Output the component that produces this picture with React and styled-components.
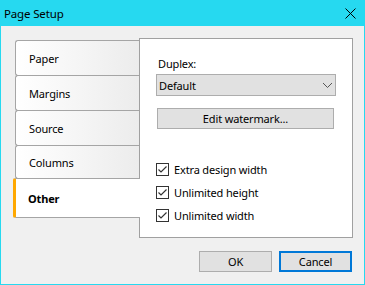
import React from 'react';
import styled, { createGlobalStyle } from 'styled-components';

const GlobalStyle = createGlobalStyle`
  html, body {
    margin: 0;
    padding: 0;
    background: #f0f0f0;
  }
  * {
    box-sizing: border-box;
  }
`;

const Window = styled.div`
  width: 365px;
  height: 285px;
  border: 1px solid #26d9f0;
  border-top: none;
  background: #f0f0f0;
  font-family: "Segoe UI", "Noto Sans", sans-serif;
  font-size: 11px;
  letter-spacing: -0.15px;
  color: #000;
  display: flex;
  flex-direction: column;
`;

const TitleBar = styled.div`
  height: 26px;
  margin: 0 -1px;
  background: #26d9f0;
  display: flex;
  align-items: center;
  justify-content: space-between;
  padding: 0 9px 0 4px;
`;

const Title = styled.span`
  font-size: 11.5px;
`;

const Body = styled.div`
  display: flex;
  padding: 12px 0 0 14px;
`;

const TabList = styled.div`
  width: 124px;
  padding-top: 2px;
  display: flex;
  flex-direction: column;
`;

const Tab = styled.div`
  height: ${p => p.$h}px;
  margin-bottom: -1px;
  border: 1px solid #a5a5a5;
  border-right: none;
  border-radius: 3px 0 0 3px;
  background: linear-gradient(to right, #ffffff, #ececec);
  display: flex;
  align-items: center;
  padding-left: 13px;
`;

const ActiveTab = styled.div`
  height: ${p => p.$h}px;
  margin-left: -2px;
  margin-right: -1px;
  position: relative;
  z-index: 1;
  border-top: 1px solid #a5a5a5;
  border-bottom: 1px solid #a5a5a5;
  border-left: 3px solid #ffa800;
  border-radius: 2px 0 0 2px;
  background: #fff;
  display: flex;
  align-items: center;
  padding-left: 12px;
  font-weight: bold;
`;

const Panel = styled.div`
  width: 214px;
  height: 200px;
  border: 1px solid #a0a0a0;
  background: #fff;
  padding: 16px 0 0 16px;
  display: flex;
  flex-direction: column;
`;

const Label = styled.div`
  margin-left: 2px;
  height: 18px;
  line-height: 18px;
`;

const Select = styled.div`
  width: 180px;
  height: 22px;
  margin-top: 1px;
  background: #e1e1e1;
  border: 1px solid #adadad;
  display: flex;
  align-items: center;
  justify-content: space-between;
  padding: 0 2px 0 2px;
`;

const Button = styled.div`
  width: ${p => p.$w}px;
  height: 21px;
  margin-left: ${p => p.$ml || 0}px;
  margin-top: ${p => p.$mt || 0}px;
  background: #e1e1e1;
  border: ${p => (p.$focus ? '2px solid #0078d7' : '1px solid #adadad')};
  display: flex;
  align-items: center;
  justify-content: center;
`;

const Checks = styled.div`
  margin-top: 34px;
  display: flex;
  flex-direction: column;
  gap: 10px;
`;

const CheckRow = styled.div`
  display: flex;
  align-items: center;
  height: 13px;
`;

const Box = styled.div`
  width: 13px;
  height: 13px;
  border: 1px solid #333;
  background: #fff;
  margin-right: 5px;
  display: flex;
  align-items: center;
  justify-content: center;
`;

const Footer = styled.div`
  display: flex;
  justify-content: flex-end;
  padding: 13px 12px 0 0;
`;

function Check({ label }) {
  return (
    <CheckRow>
      <Box>
        <svg width="11" height="11" viewBox="0 0 11 11">
          <path d="M1.5 5.5 L4 8 L9.5 2.5" fill="none" stroke="#333" strokeWidth="1.2" />
        </svg>
      </Box>
      {label}
    </CheckRow>
  );
}

export default function App() {
  return (
    <>
      <GlobalStyle />
      <Window>
        <TitleBar>
          <Title>Page Setup</Title>
          <svg width="11" height="11" viewBox="0 0 11 11">
            <path d="M0.5 0.5 L10.5 10.5 M10.5 0.5 L0.5 10.5" stroke="#000" strokeWidth="1" />
          </svg>
        </TitleBar>
        <Body>
          <TabList>
            <Tab $h={36}>Paper</Tab>
            <Tab $h={36}>Margins</Tab>
            <Tab $h={36}>Source</Tab>
            <Tab $h={34}>Columns</Tab>
            <ActiveTab $h={40}>Other</ActiveTab>
          </TabList>
          <Panel>
            <Label>Duplex:</Label>
            <Select>
              <span>Default</span>
              <svg width="11" height="7" viewBox="0 0 11 7">
                <path d="M1 1 L5.5 5.5 L10 1" fill="none" stroke="#555" strokeWidth="1" />
              </svg>
            </Select>
            <Button $w={177} $ml={1} $mt={12}>Edit watermark...</Button>
            <Checks>
              <Check label="Extra design width" />
              <Check label="Unlimited height" />
              <Check label="Unlimited width" />
            </Checks>
          </Panel>
        </Body>
        <Footer>
          <Button $w={73}>OK</Button>
          <Button $w={73} $ml={7} $focus>Cancel</Button>
        </Footer>
      </Window>
    </>
  );
}
